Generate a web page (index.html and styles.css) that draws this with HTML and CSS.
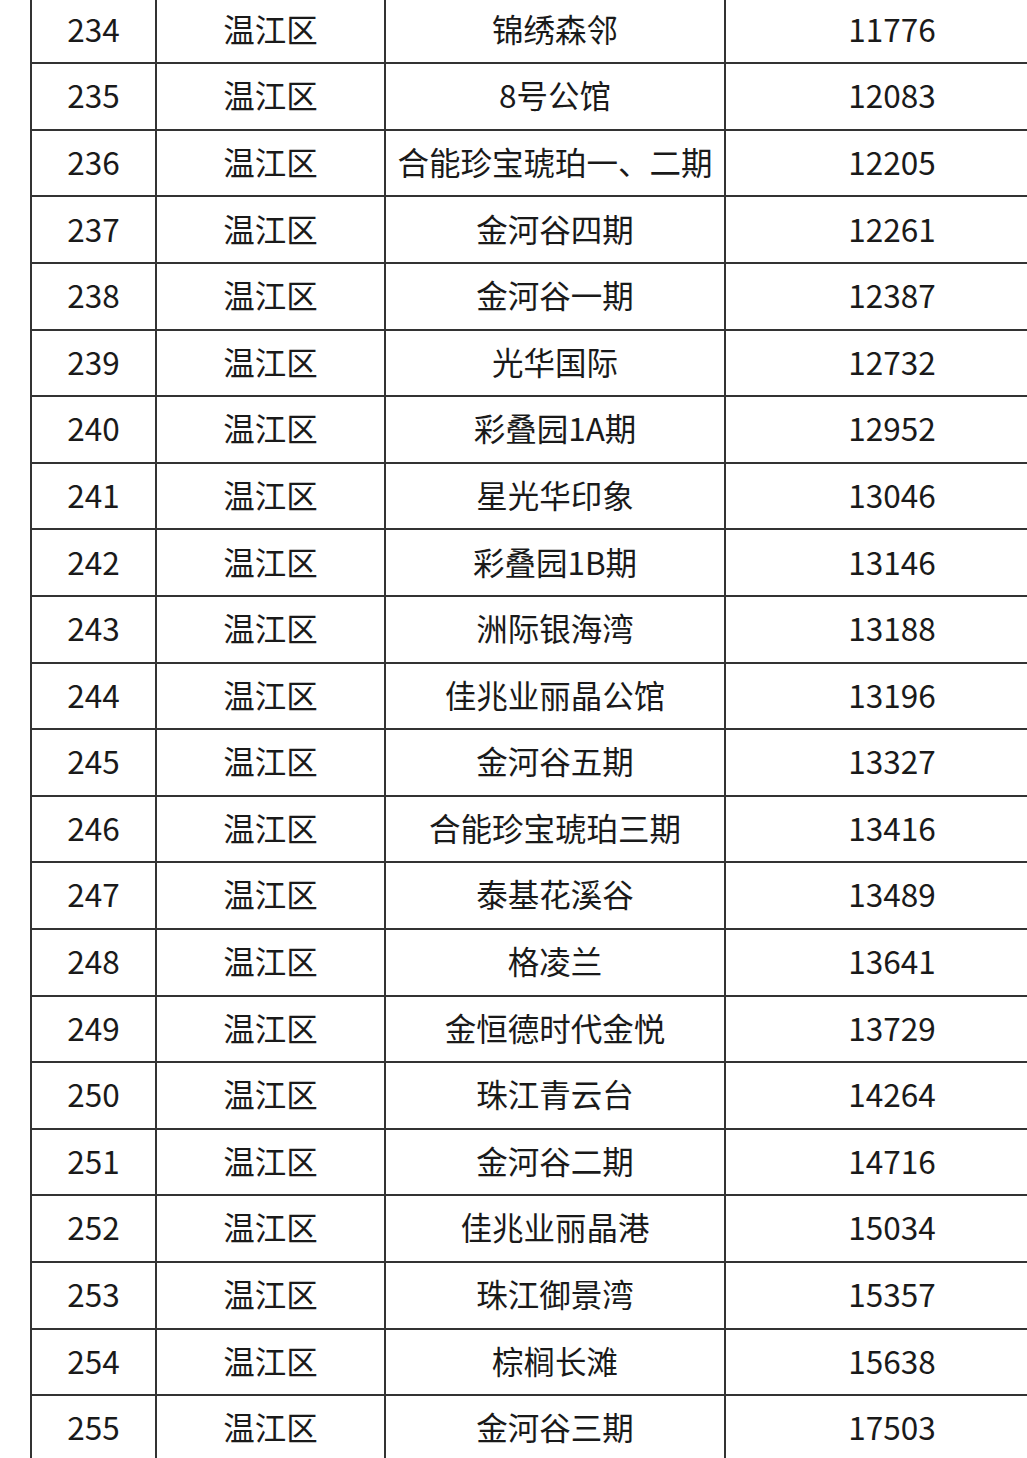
FILE: index.html
```html
<!DOCTYPE html>
<html lang="zh-CN">
<head>
<meta charset="utf-8">
<title>温江区</title>
<link rel="stylesheet" href="styles.css">
</head>
<body>
<div class="sheet">
  <div class="c">234</div><div class="c">温江区</div><div class="c">锦绣森邻</div><div class="c">11776</div>
  <div class="c">235</div><div class="c">温江区</div><div class="c">8号公馆</div><div class="c">12083</div>
  <div class="c">236</div><div class="c">温江区</div><div class="c">合能珍宝琥珀一、二期</div><div class="c">12205</div>
  <div class="c">237</div><div class="c">温江区</div><div class="c">金河谷四期</div><div class="c">12261</div>
  <div class="c">238</div><div class="c">温江区</div><div class="c">金河谷一期</div><div class="c">12387</div>
  <div class="c">239</div><div class="c">温江区</div><div class="c">光华国际</div><div class="c">12732</div>
  <div class="c">240</div><div class="c">温江区</div><div class="c">彩叠园1A期</div><div class="c">12952</div>
  <div class="c">241</div><div class="c">温江区</div><div class="c">星光华印象</div><div class="c">13046</div>
  <div class="c">242</div><div class="c">温江区</div><div class="c">彩叠园1B期</div><div class="c">13146</div>
  <div class="c">243</div><div class="c">温江区</div><div class="c">洲际银海湾</div><div class="c">13188</div>
  <div class="c">244</div><div class="c">温江区</div><div class="c">佳兆业丽晶公馆</div><div class="c">13196</div>
  <div class="c">245</div><div class="c">温江区</div><div class="c">金河谷五期</div><div class="c">13327</div>
  <div class="c">246</div><div class="c">温江区</div><div class="c">合能珍宝琥珀三期</div><div class="c">13416</div>
  <div class="c">247</div><div class="c">温江区</div><div class="c">泰基花溪谷</div><div class="c">13489</div>
  <div class="c">248</div><div class="c">温江区</div><div class="c">格凌兰</div><div class="c">13641</div>
  <div class="c">249</div><div class="c">温江区</div><div class="c">金恒德时代金悦</div><div class="c">13729</div>
  <div class="c">250</div><div class="c">温江区</div><div class="c">珠江青云台</div><div class="c">14264</div>
  <div class="c">251</div><div class="c">温江区</div><div class="c">金河谷二期</div><div class="c">14716</div>
  <div class="c">252</div><div class="c">温江区</div><div class="c">佳兆业丽晶港</div><div class="c">15034</div>
  <div class="c">253</div><div class="c">温江区</div><div class="c">珠江御景湾</div><div class="c">15357</div>
  <div class="c">254</div><div class="c">温江区</div><div class="c">棕榈长滩</div><div class="c">15638</div>
  <div class="c">255</div><div class="c">温江区</div><div class="c">金河谷三期</div><div class="c">17503</div>
</div>
</body>
</html>
```

FILE: styles.css
```css
html, body {
  margin: 0;
  padding: 0;
  background: #ffffff;
  overflow: hidden;
}
body {
  width: 1027px;
  height: 1458px;
  font-family: "Noto Sans CJK SC", "Noto Sans", sans-serif;
  color: #1a1a1a;
}
.sheet {
  display: grid;
  grid-template-columns: 123px 227px 338px 332px;
  grid-auto-rows: 64.6px;
  gap: 2px;
  padding: 2px;
  margin: -4.3px 0 0 30px;
  width: max-content;
  background: #333333;
}
.c {
  background: #ffffff;
  display: flex;
  align-items: center;
  justify-content: center;
  padding-bottom: 3px;
  font-size: 31.5px;
  line-height: 1;
  white-space: nowrap;
}
```
